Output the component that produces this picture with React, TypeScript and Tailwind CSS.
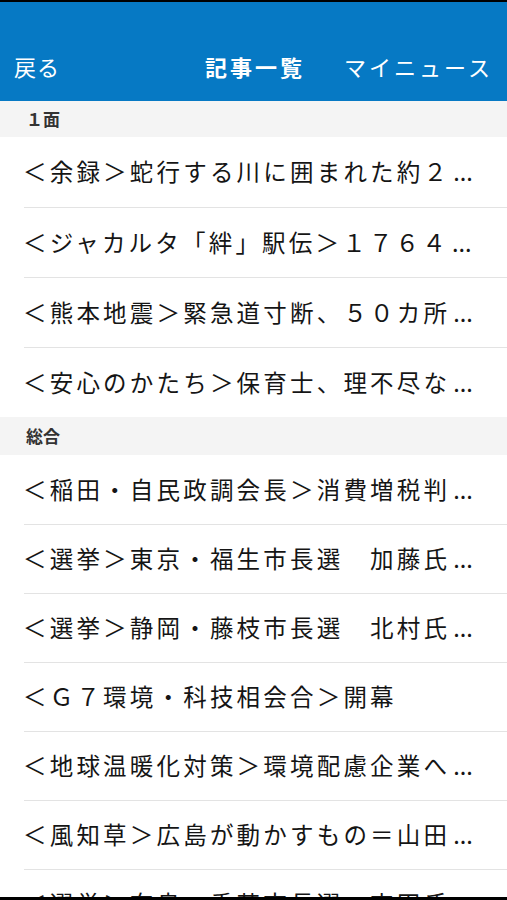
import React from "react";

const font = { fontFamily: '"Noto Sans CJK JP", "Noto Sans", sans-serif' };

const sections: { title: string; items: [string, boolean][]; h: string; rowH: string }[] = [
  {
    title: "１面",
    h: "h-[36px]",
    rowH: "h-[70px]",
    items: [
      ["＜余録＞蛇行する川に囲まれた約２", true],
      ["＜ジャカルタ「絆」駅伝＞１７６４", true],
      ["＜熊本地震＞緊急道寸断、５０カ所", true],
      ["＜安心のかたち＞保育士、理不尽な", true],
    ],
  },
  {
    title: "総合",
    h: "h-[38px]",
    rowH: "h-[69px]",
    items: [
      ["＜稲田・自民政調会長＞消費増税判", true],
      ["＜選挙＞東京・福生市長選　加藤氏", true],
      ["＜選挙＞静岡・藤枝市長選　北村氏", true],
      ["＜Ｇ７環境・科技相会合＞開幕", false],
      ["＜地球温暖化対策＞環境配慮企業へ", true],
      ["＜風知草＞広島が動かすもの＝山田", true],
      ["＜選挙＞奈良・香芝市長選　吉田氏", true],
    ],
  },
];

export default function App() {
  return (
    <div className="w-[507px] h-[900px] overflow-hidden bg-white relative" style={font}>
      <div className="h-[2px] bg-black" />
      <div className="h-[99px] bg-[#0679c4] flex items-end pb-[24px] text-white relative">
        <div className="pl-[14px] text-[22px] leading-none tracking-[1px]">戻る</div>
        <div className="absolute left-[205px] bottom-[24px] text-[22px] font-bold leading-none tracking-[3px]">記事一覧</div>
        <div className="absolute left-[344px] bottom-[24px] text-[22px] leading-none tracking-[3px]">マイニュース</div>
      </div>
      {sections.map((s) => (
        <div key={s.title}>
          <div className={s.h + " bg-[#f4f4f4] flex items-center pl-[26px] text-[17px] font-bold text-[#333]"}>
            {s.title}
          </div>
          {s.items.map(([it, more], i) => (
            <div key={it} className="pl-[24px]">
              <div
                className={
                  s.rowH +
                  " flex items-center text-[23.5px] text-[#151515] whitespace-nowrap " +
                  (i > 0 ? "border-t border-[#e3e3e3]" : "")
                }
              >
                <span className="-ml-[1px] tracking-[3.2px]">{it}</span>
                {more && <span className="tracking-[0px] ml-[3px]">...</span>}
              </div>
            </div>
          ))}
        </div>
      ))}
      <div className="absolute left-0 right-0 bottom-0 h-[3px] bg-black" />
    </div>
  );
}
